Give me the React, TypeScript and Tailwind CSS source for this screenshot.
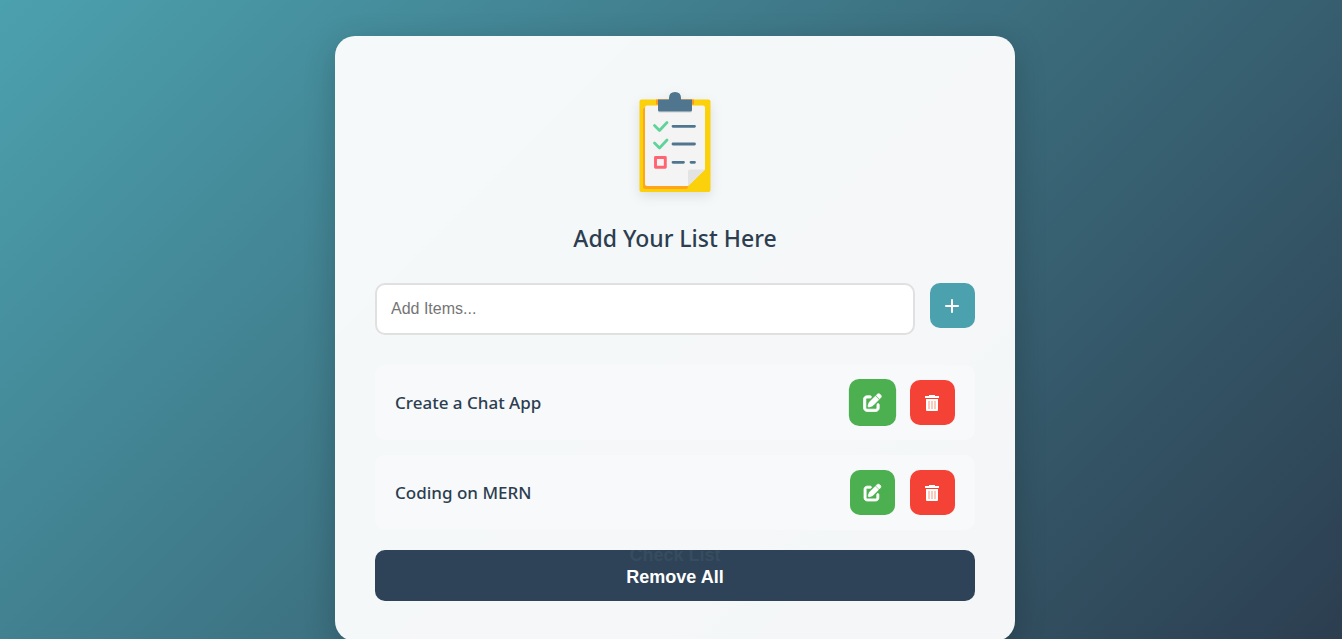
import { useState } from "react";
import { FaPenToSquare } from "react-icons/fa6";

function ClipboardArt() {
  return (
    <svg
      viewBox="0 0 100 100"
      className="size-[100px] drop-shadow-[0_4px_6px_rgba(0,0,0,0.1)]"
      role="img"
      aria-label="Checklist"
    >
      <rect x="14.500" y="7.500" width="71" height="92.500" rx="2" fill="#fbd10b" />
      <path d="M31 7.500h38v5H31z" fill="#ff9a1f" />
      <path d="M21 14h5v79h38l-2 4H20a2 2 0 0 1-2-2V17z" fill="#ffa41b" />
      <path d="M22 13.500h56q2 0 2 2v62L63 94H22q-2 0-2-2V15.500q0-2 2-2z" fill="#f4f4f4" />
      <path d="M80 77.500 63 94V79.500q0-2 2-2z" fill="#e3e3e3" />
      <path d="M33 14h34v5q0 2-2 2H35q-2 0-2-2z" fill="#dfe1e3" />
      <path d="M33 7.500h11V6q0-6 6-6t6 6v1.500h11V18q0 1.500-1.500 1.500h-31Q33 19.500 33 18z" fill="#50758e" />
      <g fill="none" strokeWidth="2.800" strokeLinecap="round" strokeLinejoin="round">
        <path d="m29.500 33.500 5 5 7.500-8M29.500 51l5 5 7.500-8" stroke="#5fd39a" />
        <path d="M48 34.300h21.500M48 52h21.500M48 70.300h10.500M66 70.300h3.500" stroke="#50758e" />
      </g>
      <rect x="30.500" y="65.500" width="9.800" height="9.800" fill="none" stroke="#ff6470" strokeWidth="2.900" strokeLinejoin="round" />
    </svg>
  );
}

function PlusIcon() {
  return (
    <svg viewBox="0 0 15 15" className="size-[15px]" aria-hidden="true">
      <path d="M7 2v12M1 8h12" stroke="#fff" strokeWidth="2" strokeLinecap="round" />
    </svg>
  );
}

function TrashIcon() {
  return (
    <svg viewBox="0 0 15 17" className="h-[17px] w-[15px]" aria-hidden="true">
      <path d="M4 1h6v1h4v2H0V2h4zM1 5h12v11q0 1-1 1H2q-1 0-1-1z" fill="#fff" />
      <path d="M3 7h2v8H3zM6 7h2v8H6zM9 7h2v8H9z" fill="#fcc9bd" />
    </svg>
  );
}

const initialItems = ["Create a Chat App", "Coding on MERN"];

export default function App() {
  const [items, setItems] = useState(initialItems);
  const [draft, setDraft] = useState("");

  const addItem = () => {
    const text = draft.trim();
    if (!text) return;
    setItems([...items, text]);
    setDraft("");
  };

  return (
    <main className="flex min-h-screen items-start justify-center bg-[linear-gradient(135deg,#4ca1af,#2c3e50)] pt-9 pl-2 font-['Noto_Sans',sans-serif] text-[#2c3e50]">
      <section className="w-full max-w-[680px] rounded-[20px] bg-white/95 px-10 pt-14 pb-10 shadow-[0_8px_32px_rgba(0,0,0,0.2)]">
        <header className="flex flex-col items-center">
          <ClipboardArt />
          <h1 className="mt-7 text-[23px] leading-9 font-medium">Add Your List Here</h1>
        </header>

        <form
          className="mt-[27px] flex items-start gap-[15px]"
          onSubmit={(event) => {
            event.preventDefault();
            addItem();
          }}
        >
          <input
            type="text"
            aria-label="New item"
            placeholder="Add Items..."
            value={draft}
            onChange={(event) => setDraft(event.target.value)}
            className="h-[52px] min-w-0 flex-1 rounded-[10px] border-2 border-[#e0e0e0] bg-white px-3.5 font-['Liberation_Sans',sans-serif] text-base outline-none placeholder:text-[#757575]"
          />
          <button
            type="submit"
            aria-label="Add item"
            className="flex size-[45px] shrink-0 items-center justify-center rounded-[10px] bg-[#4ca1af]"
          >
            <PlusIcon />
          </button>
        </form>

        <ul className="mt-[30px] flex flex-col gap-[15px]">
          {items.map((item, index) => (
            <li key={item} className="flex items-center justify-between rounded-[10px] bg-[#f8f9fb] px-5 py-[15px]">
              <span className="text-[17px] font-medium">{item}</span>
              <div className="flex gap-[15px]">
                <button
                  type="button"
                  aria-label={`Edit ${item}`}
                  className={
                    "flex size-[45px] items-center justify-center rounded-[10px] bg-[#4caf50] text-[17px] text-white hover:scale-105 " +
                    (index === 0 ? "scale-105" : "")
                  }
                >
                  <FaPenToSquare className="overflow-visible stroke-white stroke-[24px]" />
                </button>
                <button
                  type="button"
                  aria-label={`Delete ${item}`}
                  onClick={() => setItems(items.filter((_, i) => i !== index))}
                  className="flex size-[45px] items-center justify-center rounded-[10px] bg-[#f44336]"
                >
                  <TrashIcon />
                </button>
              </div>
            </li>
          ))}
        </ul>

        <button
          type="button"
          onClick={() => setItems([])}
          className="relative mt-5 flex h-[51px] w-full items-center justify-center overflow-hidden rounded-[10px] bg-[#2e4358] pt-[3px] font-['Liberation_Sans',sans-serif] text-lg font-bold text-white"
        >
          <span className="absolute inset-x-0 -top-[7px] text-center leading-6 text-[#374d5f]" aria-hidden="true">
            Check List
          </span>
          <span>Remove All</span>
        </button>
      </section>
    </main>
  );
}
